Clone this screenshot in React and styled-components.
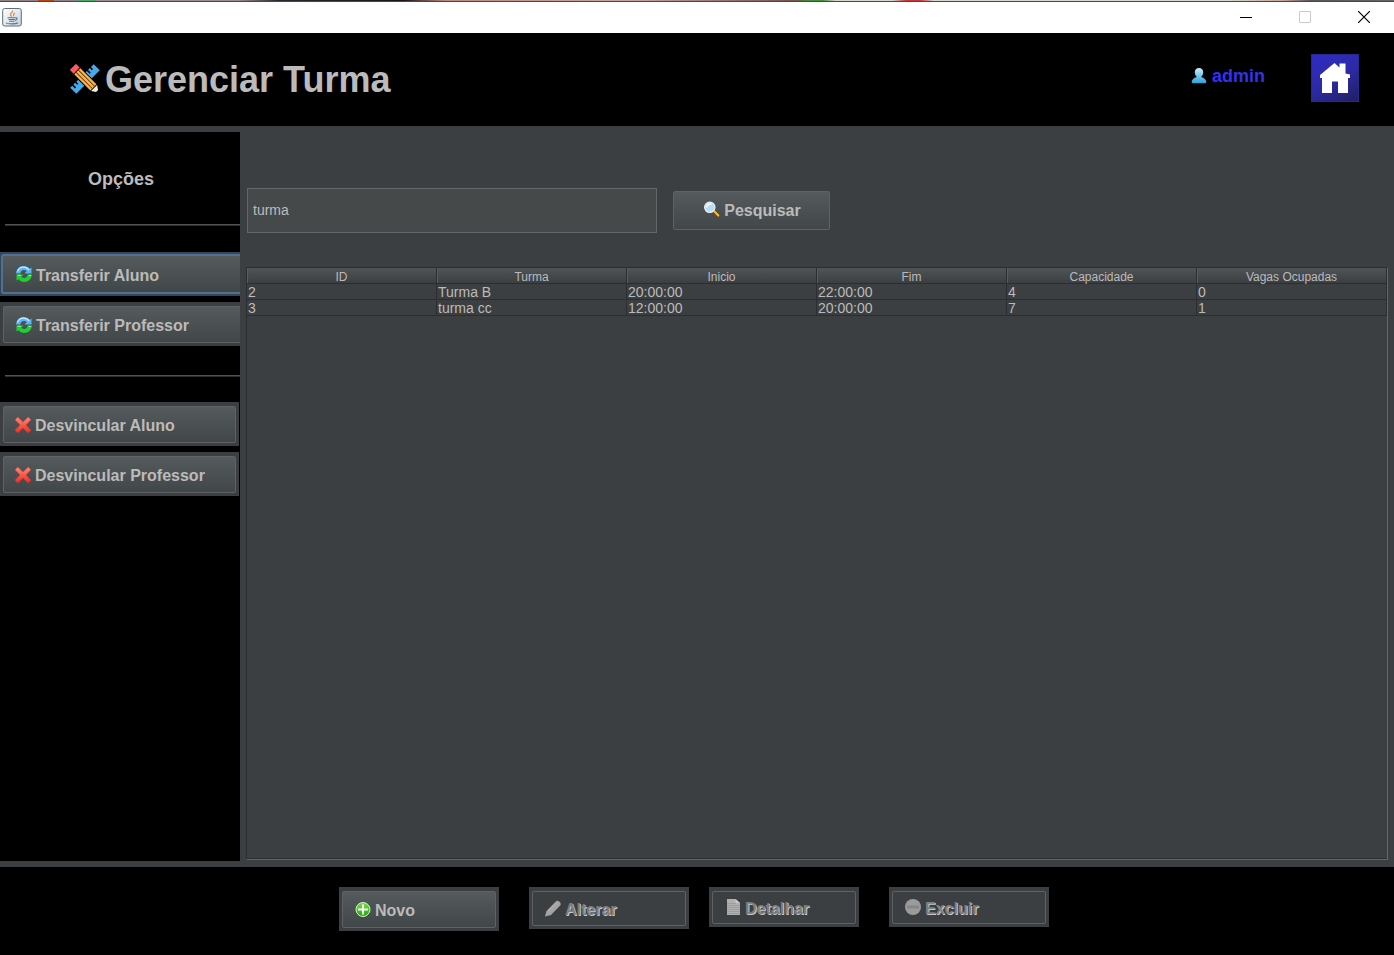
import React from "react";
import styled, { createGlobalStyle, css } from "styled-components";

const c = {
  panel: "#3c3f41",
  line: "#2b2d2f",
  edge: "#646769",
  text: "#bbbbbb",
};

const GlobalStyle = createGlobalStyle`
  *, *::before, *::after { box-sizing: border-box; }
  html, body { margin: 0; padding: 0; background: #000; }
  body, button, input, table { font-family: "Liberation Sans", Arial, sans-serif; }
`;

const Window = styled.div`
  min-height: 100vh;
  display: flex;
  flex-direction: column;
  background: ${c.panel};
  color: ${c.text};
`;

const DesktopEdge = styled.div`
  height: 2px;
  background:
    linear-gradient(#0000 1px, #4a464a 1px),
    linear-gradient(90deg, #8f8387 0 38px, #b5451f 38px 54px, #8f8387 54px 78px, #4fa56a 78px 96px,
      #9b8f95 96px 17%, #2c2530 20%, #1b1518 29%, #c08a80 32%, #c9a6a0 45%, #77534f 57%,
      #3f8f3c 58% 59%, #d8d8d0 60% 64%, #c03a3a 65% 66%, #d6dad2 67% 88%, #c9a596 92%, #59565a 94%, #6a6468);
`;

const TitleBar = styled.div`
  height: 31px;
  display: flex;
  align-items: center;
  justify-content: space-between;
  padding: 0 1px 0 2px;
  background: #fff;
`;

const WindowControls = styled.div`
  display: flex;
  height: 100%;
`;

const WindowButton = styled.button`
  width: 59px;
  height: 100%;
  display: flex;
  align-items: center;
  justify-content: center;
  padding: 0 0 2px;
  border: 0;
  background: transparent;
`;

const Header = styled.header`
  height: 93px;
  display: flex;
  align-items: center;
  justify-content: space-between;
  padding: 0 35px 0 70px;
  background: #000;
`;

const Title = styled.h1`
  display: flex;
  align-items: center;
  gap: 5px;
  margin: 0;
  font-size: 36px;
  line-height: 40px;
`;

const Account = styled.div`
  display: flex;
  align-items: center;
  gap: 46px;
  padding-bottom: 3px;
`;

const User = styled.a`
  display: flex;
  align-items: center;
  gap: 5px;
  padding-bottom: 4px;
  color: #3430f0;
  font-size: 18px;
  font-weight: bold;
  line-height: 20px;
  text-decoration: none;
`;

const HomeButton = styled.button`
  width: 48px;
  height: 48px;
  display: grid;
  place-items: center;
  padding: 0;
  border: 1px solid #2a2890;
  background: linear-gradient(150deg, #2e2bc4, #2d2aa8 50%, #211f60);
`;

const Body = styled.div`
  flex: 1;
  display: flex;
  margin: 6px 0;
`;

const Sidebar = styled.nav`
  flex: 0 0 240px;
  overflow: hidden;
  background: #000;
`;

const SidebarTitle = styled.h2`
  margin: 0;
  padding: 37px 0 0 2px;
  font-size: 18px;
  line-height: 20px;
  text-align: center;
`;

const Separator = styled.hr`
  height: 2px;
  margin: ${(p) => (p.$first ? "35px" : "29px")} 0 ${(p) => (p.$first ? "26px" : "25px")} 5px;
  border: 0;
  background: linear-gradient(#515151 50%, #2e2e2e 50%);
`;

const SideActions = styled.div`
  display: flex;
  flex-direction: column;
  gap: 6px;
`;

const buttonWidths = { side: "239px", wide: "246px", normal: "160px", small: "150px" };

const ButtonFace = styled.span`
  flex: 1;
  display: flex;
  align-items: center;
  gap: 4px;
  padding-left: 12px;
  border: 1px solid #5e6264;
  border-radius: 2px;
  background: linear-gradient(#555a5c, #414648);
`;

const ButtonLabel = styled.span`
  padding-top: 3px;
`;

const Button = styled.button`
  width: ${(p) => buttonWidths[p.$width || "normal"]};
  height: ${(p) => p.$height || 44}px;
  display: flex;
  padding: 4px 3px 3px;
  border: 0;
  background: ${c.panel};
  color: ${c.text};
  font-size: 16px;
  font-weight: bold;
  line-height: 20px;
  text-align: left;
  white-space: nowrap;

  ${(p) =>
    p.$width === "side" &&
    css`
      ${ButtonFace} { padding-left: 11px; }
    `}

  ${(p) =>
    p.$focused &&
    css`
      padding: 2px 1px 2px;
      background: #34465a;
      ${ButtonFace} { border: 2px solid #55708d; border-radius: 3px; padding-left: 13px; }
    `}

  &:disabled {
    color: #7c7e80;
    text-shadow: 1px 1px 0 #c8c8c8;
  }

  &:disabled ${ButtonFace} { background: ${c.panel}; }
`;

const Main = styled.main`
  flex: 1;
  min-width: 0;
  display: flex;
  flex-direction: column;
  padding: 56px 6px 1px;
`;

const SearchForm = styled.form`
  display: flex;
  align-items: center;
  gap: 16px;
  margin-bottom: 34px;
  padding-left: 1px;
`;

const SearchInput = styled.input`
  width: 410px;
  height: 45px;
  padding: 0 5px 1px;
  border: 1px solid ${c.edge};
  outline: 0;
  background: #45494a;
  color: ${c.text};
  font-size: 14px;
`;

const SearchButton = styled.button`
  width: 157px;
  height: 39px;
  display: flex;
  align-items: center;
  justify-content: center;
  gap: 4px;
  padding: 0 0 0 2px;
  border: 1px solid #5e6264;
  border-radius: 2px;
  background: linear-gradient(#555a5c, #414648);
  color: ${c.text};
  font-size: 16px;
  font-weight: bold;
`;

const TablePane = styled.div`
  flex: 1;
  border: 1px solid ${c.line};
  border-right-color: ${c.edge};
  border-bottom-color: ${c.edge};
  box-shadow: inset 0 -1px ${c.line};
`;

const Table = styled.table`
  width: 100%;
  table-layout: fixed;
  border-collapse: separate;
  border-spacing: 0;
`;

const HeadCell = styled.th`
  height: 16px;
  padding: 3px 0 0;
  border-right: 1px solid ${c.line};
  border-bottom: 1px solid ${c.line};
  background: linear-gradient(#505456, ${c.panel});
  box-shadow: inset 1px 0 #5a5d5f;
  font-size: 12px;
  font-weight: normal;
  line-height: 12px;
`;

const Cell = styled.td`
  height: 16px;
  padding: 2px 1px 0;
  border-right: 1px solid ${c.line};
  border-bottom: 1px solid ${c.line};
  font-size: 14px;
  line-height: 13px;
`;

const Footer = styled.footer`
  min-height: 88px;
  display: flex;
  justify-content: center;
  align-items: flex-start;
  gap: 30px;
  padding: 20px 6px 20px 0;
  background: #000;
`;

const ButtonPair = styled.div`
  display: flex;
  align-items: flex-start;
  gap: 20px;
`;

const Icon = styled.svg`
  flex: none;
  display: block;
`;

const JavaIcon = () => (
  <Icon width="20" height="20" viewBox="0 0 20 20" fill="none">
    <defs>
      <linearGradient id="java" x2="1" y2="1">
        <stop stopColor="#fff" /><stop offset="1" stopColor="#c9d3da" />
      </linearGradient>
    </defs>
    <rect x=".7" y=".5" width="18.6" height="17.5" rx="2" fill="url(#java)" stroke="#587082" />
    <path d="M10.500 2.500c1 2-2.800 2.500-2 4.500.3.800 1 1 1 1.700M13 5c-2 1-1.500 2-1.500 3.300" stroke="#ea8a3c" strokeWidth="1.300" />
    <path d="M5.500 9.700h8M6.500 11.500h6.500M7 13.200h5.500M13.500 9.800c2.500-.5 1.800 2.200-.5 2.600M4 14.900c2 1.300 10 1.300 12-.2" stroke="#57758f" strokeWidth="1.100" />
  </Icon>
);

const ToolsIcon = () => (
  <Icon width="30" height="32" viewBox="0 0 30 32">
    <g transform="translate(15 15) rotate(45) scale(.95)">
      <path d="M-4.500-17.500h9v35h-9v-3h4v-1.700h-4v-2.600h3V8.500h-3v-3h4V3h-4v-6h3v-1.700h-3v-2.700h4V-9h-4v-2.700h3v-1.700h-3z" fill="#45a9ea" />
    </g>
    <g transform="translate(15 15) rotate(-45) scale(.95)">
      <path d="M-5.500-18h11v31L0 19.500-5.500 13z" fill="#000" />
      <path d="M-4.500-18h9v5.500h-9z" fill="#ff5867" />
      <path d="M-4.500-11.500h9v24h-9z" fill="#ffb34f" />
      <path d="M-1.700-11.500v24M1.700-11.500v24" stroke="#5d3a12" strokeWidth="1" />
      <path d="M-4.500 13.500h9L1.500 18h-3z" fill="#f5eee2" />
    </g>
  </Icon>
);

const UserIcon = () => (
  <Icon width="16" height="16" viewBox="0 0 16 16">
    <defs>
      <linearGradient id="user" x2="0" y2="1">
        <stop stopColor="#c4efff" /><stop offset="1" stopColor="#2f9fd8" />
      </linearGradient>
    </defs>
    <path d="M8 0c2.600 0 4.200 1.900 4.200 4.300 0 1.800-.7 3.300-1.700 4.100v.8c2.300.6 4.400 1.900 4.800 4.400.1.900-.3 1.600-1.300 1.700H2c-1-.1-1.400-.8-1.300-1.700.4-2.500 2.500-3.800 4.800-4.400v-.8C4.500 7.600 3.800 6.100 3.800 4.300 3.800 1.900 5.400 0 8 0z" fill="url(#user)" />
  </Icon>
);

const HomeIcon = () => (
  <Icon width="32" height="32" viewBox="0 0 32 32">
    <path d="M15.500 1 20.500 5.500V1.500h6v10l4.500 1v3.500h-2V31H19V19.500h-6V31H3V16H1v-3z" fill="#fff" />
  </Icon>
);

const SyncIcon = () => (
  <Icon width="16" height="16" viewBox="0 0 16 16">
    <path d="M0 7.500C.3 3 3.700 0 7.700 0c2.500 0 4.400 1 5.800 2.700L15.500 1.500v6H8.500l2.200-2.300C10 4.500 9 4 7.800 4 5.800 4 4.700 5.300 4.300 7.500z" fill="#58b6f6" />
    <path d="M1.500 5.500C2.300 2.900 4.500 1.200 7.500 1.200c2.500 0 4.500 1.200 5.700 3" stroke="#c2eaff" strokeWidth="1.200" fill="none" />
    <path d="M16 8.500c-.3 4.500-3.700 7.500-7.700 7.500-2.500 0-4.400-1-5.800-2.700L.5 14.500v-6h7l-2.200 2.300c.7.700 1.700 1.200 2.900 1.200 2 0 3.100-1.300 3.500-3.500z" fill="#1dcf32" />
    <path d="M1.500 9.300h3.500M12.500 9.500h2.500" stroke="#8cf585" fill="none" />
  </Icon>
);

const CrossIcon = () => (
  <Icon width="16" height="16" viewBox="0 0 16 16">
    <defs>
      <linearGradient id="cross" x2="0" y2="1">
        <stop stopColor="#ff8a78" /><stop offset="1" stopColor="#f02a1e" />
      </linearGradient>
    </defs>
    <path d="M2.800 0 8 5 13.200 0 16 2.800 11 8l5 5.200-2.800 2.800L8 11l-5.200 5L0 13.200 5 8 0 2.800z" fill="url(#cross)" stroke="#e2382c" strokeWidth=".5" strokeLinejoin="round" />
  </Icon>
);

const LensIcon = () => (
  <Icon width="16" height="20" viewBox="0 0 16 20">
    <path d="m10 10.500 4.300 4.500" stroke="#6b4612" strokeWidth="3.600" strokeLinecap="round" />
    <path d="m10.500 10.500 3.800 4" stroke="#f7b53c" strokeWidth="2.200" strokeLinecap="round" />
    <circle cx="5.800" cy="6.300" r="5.200" fill="#b9dcf7" stroke="#e9f2fa" strokeWidth="1.200" />
    <path d="M2.500 6.500C3 4 5 2.800 7.500 3.200" stroke="#f5fbff" strokeWidth="1.500" fill="none" />
  </Icon>
);

const PlusIcon = () => (
  <Icon width="16" height="18" viewBox="0 0 16 18">
    <defs>
      <linearGradient id="plus" x2="0" y2="1">
        <stop stopColor="#7bdc4a" /><stop offset="1" stopColor="#1fa80c" />
      </linearGradient>
    </defs>
    <circle cx="8" cy="8.500" r="7" fill="url(#plus)" stroke="#d3f7be" strokeWidth="1" />
    <path d="M8 3.500v10M3 8.500h10" stroke="#fff" strokeWidth="2" />
  </Icon>
);

const PencilIcon = () => (
  <Icon width="16" height="18" viewBox="0 0 16 18">
    <path d="M0 16.500 1.500 11 10.800 1.400c2-1.900 6.400 1.600 4.400 4.200L6 15z" fill="#a3a3a3" />
    <path d="m3.500 11 8-8" stroke="#b8b8b8" />
  </Icon>
);

const PageIcon = () => (
  <Icon width="16" height="20" viewBox="0 0 16 20">
    <path d="M2 1h8.500L15 5v12H2z" fill="#b0b0b0" />
    <path d="M2 5.500h9M2 7.500h13M2 9.500h13M2 11.500h13M2 13.500h13M2 15.500h13" stroke="#9d9d9d" />
    <path d="M10.500 1v4H15z" fill="#c9c9c9" />
  </Icon>
);

const MinusIcon = () => (
  <Icon width="16" height="18" viewBox="0 0 16 18">
    <circle cx="8" cy="8" r="8" fill="#9b9b9b" />
    <path d="M2 8h12" stroke="#868686" strokeWidth="3" />
  </Icon>
);

const Action = ({ icon, children, ...props }) => (
  <Button type="button" {...props}>
    <ButtonFace>{icon}<ButtonLabel>{children}</ButtonLabel></ButtonFace>
  </Button>
);

const columns = ["ID", "Turma", "Inicio", "Fim", "Capacidade", "Vagas Ocupadas"];
const rows = [
  ["2", "Turma B", "20:00:00", "22:00:00", "4", "0"],
  ["3", "turma cc", "12:00:00", "20:00:00", "7", "1"],
];

export default function App() {
  return (
    <Window>
      <GlobalStyle />
      <DesktopEdge />
      <TitleBar>
        <JavaIcon />
        <WindowControls>
          <WindowButton aria-label="Minimizar">
            <Icon width="12" height="12" viewBox="0 0 12 12"><path d="M0 6.500h12" stroke="#000" /></Icon>
          </WindowButton>
          <WindowButton aria-label="Maximizar" disabled>
            <Icon width="12" height="12" viewBox="0 0 12 12"><path d="M.5.500h11v11H.5z" fill="none" stroke="#d2c8cc" /></Icon>
          </WindowButton>
          <WindowButton aria-label="Fechar">
            <Icon width="12" height="12" viewBox="0 0 12 12"><path d="m0 0 12 12M12 0 0 12" stroke="#000" strokeWidth="1.200" /></Icon>
          </WindowButton>
        </WindowControls>
      </TitleBar>

      <Header>
        <Title><ToolsIcon />Gerenciar Turma</Title>
        <Account>
          <User href="#admin"><UserIcon />admin</User>
          <HomeButton aria-label="Início"><HomeIcon /></HomeButton>
        </Account>
      </Header>

      <Body>
        <Sidebar>
          <SidebarTitle>Opções</SidebarTitle>
          <Separator $first />
          <SideActions>
            <Action $width="wide" $focused icon={<SyncIcon />}>Transferir Aluno</Action>
            <Action $width="wide" icon={<SyncIcon />}>Transferir Professor</Action>
          </SideActions>
          <Separator />
          <SideActions>
            <Action $width="side" icon={<CrossIcon />}>Desvincular Aluno</Action>
            <Action $width="side" icon={<CrossIcon />}>Desvincular Professor</Action>
          </SideActions>
        </Sidebar>

        <Main>
          <SearchForm onSubmit={(e) => e.preventDefault()}>
            <SearchInput aria-label="Pesquisar turma" defaultValue="turma" />
            <SearchButton type="submit"><LensIcon />Pesquisar</SearchButton>
          </SearchForm>
          <TablePane>
            <Table>
              <thead>
                <tr>{columns.map((name) => <HeadCell key={name} scope="col">{name}</HeadCell>)}</tr>
              </thead>
              <tbody>
                {rows.map((row) => (
                  <tr key={row[0]}>{row.map((value, i) => <Cell key={columns[i]}>{value}</Cell>)}</tr>
                ))}
              </tbody>
            </Table>
          </TablePane>
        </Main>
      </Body>

      <Footer>
        <Action icon={<PlusIcon />}>Novo</Action>
        <ButtonPair>
          <Action disabled $height={42} icon={<PencilIcon />}>Alterar</Action>
          <Action disabled $width="small" $height={40} icon={<PageIcon />}>Detalhar</Action>
        </ButtonPair>
        <Action disabled $height={40} icon={<MinusIcon />}>Excluir</Action>
      </Footer>
    </Window>
  );
}
